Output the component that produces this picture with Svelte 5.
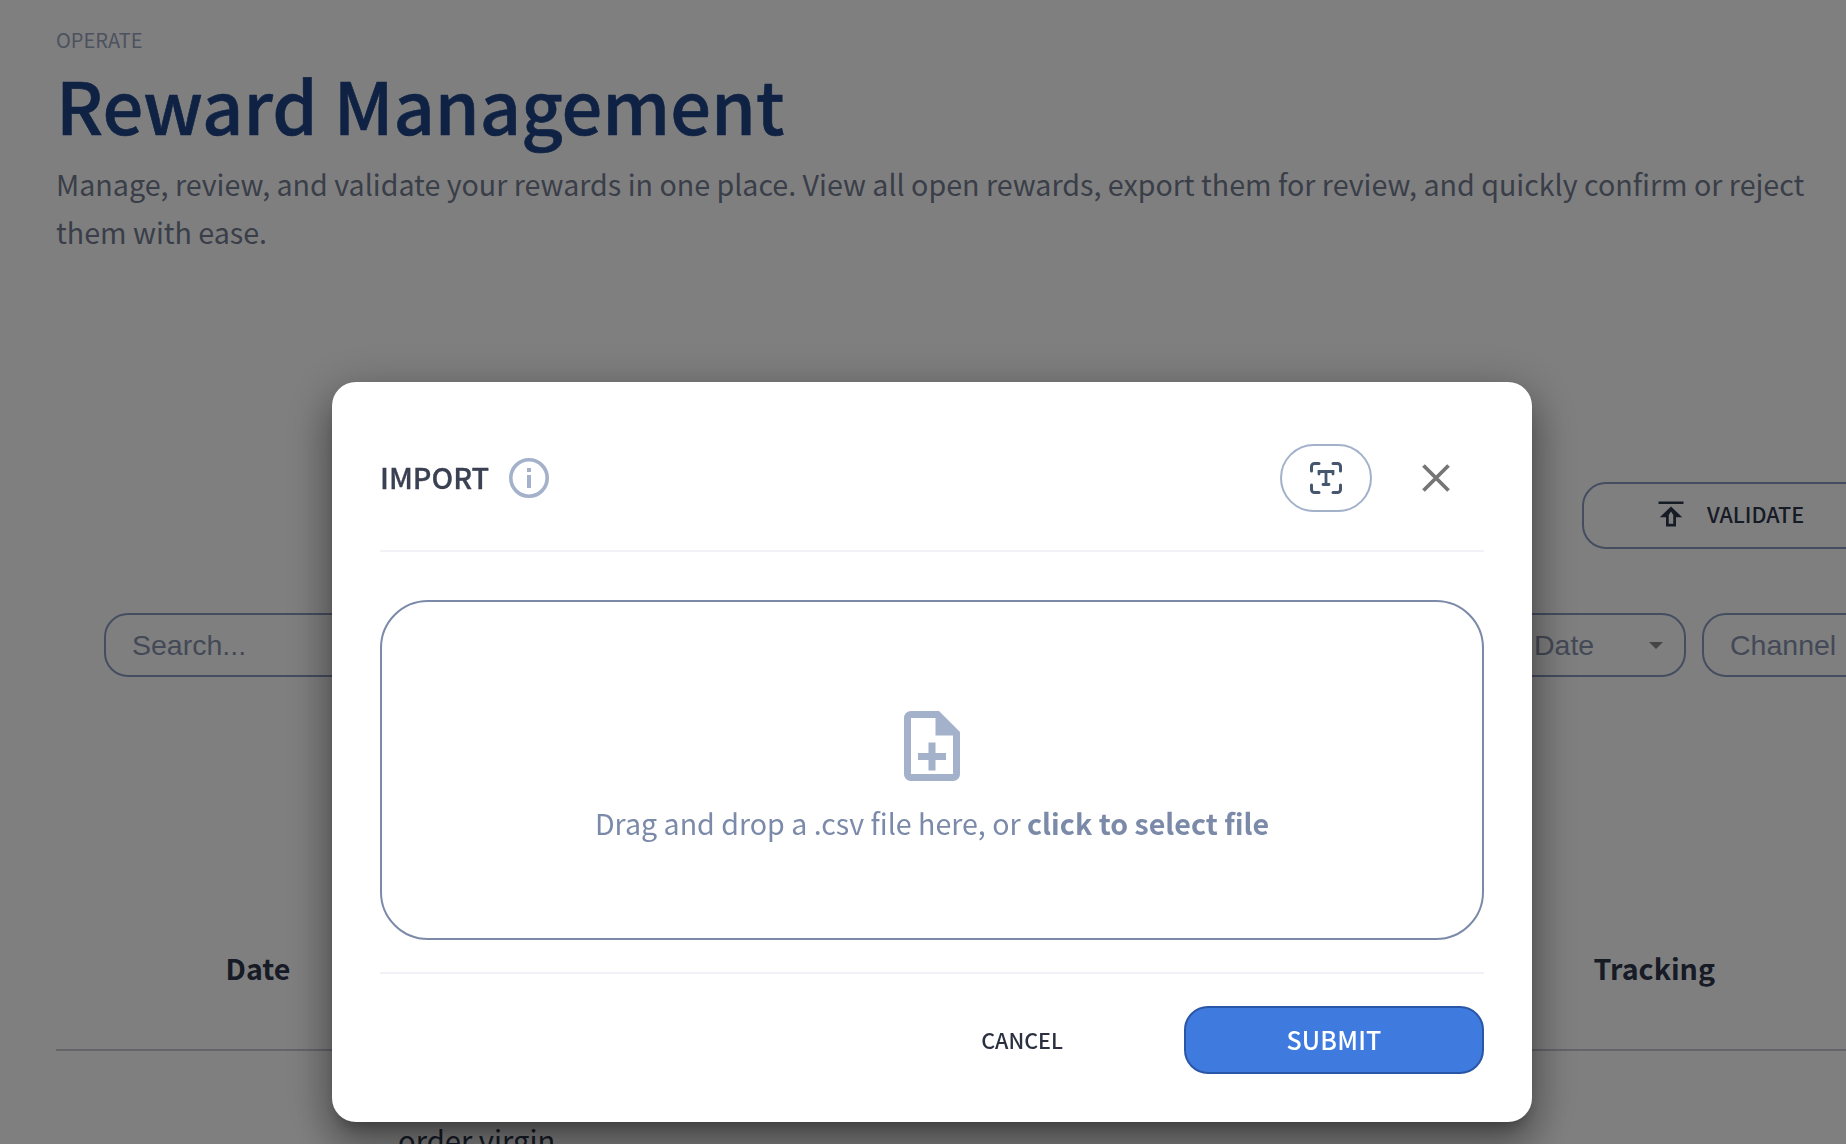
<script lang="ts">
  let fileName = $state('');
  const columns = ['Date', 'Tracking'];
</script>

<div class="page">
  <header class="page-head">
    <div class="eyebrow">OPERATE</div>
    <h1>Reward Management</h1>
    <p>Manage, review, and validate your rewards in one place. View all open rewards, export them for review, and quickly confirm or reject them with ease.</p>
  </header>

  <div class="actions">
    <button type="button" class="validate-btn">
      <svg viewBox="0 0 24 24" width="30" height="30" aria-hidden="true">
        <path d="M2 2h20v2H2zM12 6l-9 8.500h5v7.500h8v-7.500h5zM10.200 12.800 12 10l1.800 2.800v7h-3.600z" fill="#2c364c" fill-rule="evenodd" />
      </svg>
      <span>VALIDATE</span>
    </button>
  </div>

  <div class="filters">
    <div class="field search">Search...</div>
    <div class="field date">Date<span class="caret"></span></div>
    <div class="field channel">Channel</div>
  </div>

  <div class="table-head">
    {#each columns as col}
      <span>{col}</span>
    {/each}
  </div>
  <div class="row-text">order virgin</div>
</div>

<div class="overlay">
  <div class="modal" role="dialog" aria-label="Import">
    <div class="modal-head">
      <h2>IMPORT</h2>
      <svg class="info" viewBox="0 0 40 40" width="40" height="40" aria-hidden="true">
        <circle cx="20" cy="20" r="18.200" fill="none" stroke="#a3b1ca" stroke-width="3.600" />
        <rect x="18" y="10" width="4" height="4" fill="#a3b1ca" />
        <rect x="18" y="17" width="4" height="13" fill="#a3b1ca" />
      </svg>
      <button type="button" class="mode-btn" aria-label="Text mode">
        <svg viewBox="0 0 32 32" width="32" height="32" aria-hidden="true">
          <path d="M1.500 9V4.500a3 3 0 0 1 3-3H9M23 1.500h4.500a3 3 0 0 1 3 3V9M30.500 23v4.500a3 3 0 0 1-3 3H23M9 30.500H4.500a3 3 0 0 1-3-3V23" fill="none" stroke="#46566e" stroke-width="3" stroke-linecap="round" />
          <path d="M9 12V9.500h14V12M16 9.500v13M13 22.500h6" fill="none" stroke="#46566e" stroke-width="2.800" stroke-linecap="round" />
        </svg>
      </button>
      <button type="button" class="close-btn" aria-label="Close">
        <svg viewBox="0 0 28 28" width="28" height="28" aria-hidden="true">
          <path d="M1.500 1.500l25 25M26.500 1.500l-25 25" stroke="#757575" stroke-width="3.800" />
        </svg>
      </button>
    </div>

    <div class="dropzone">
      <svg viewBox="0 0 24 24" width="84" height="84" aria-hidden="true">
        <path d="M13 11h-2v3H8v2h3v3h2v-3h3v-2h-3zm1-9H6c-1.100 0-2 .9-2 2v16c0 1.100.89 2 1.990 2H18c1.100 0 2-.9 2-2V8l-6-6zm4 18H6V4h7v5h5v11z" fill="#a3b1ca" />
      </svg>
      <div class="drop-text">Drag and drop a .csv file here, or <b>click to select file</b>{fileName}</div>
    </div>

    <div class="modal-foot">
      <button type="button" class="cancel-btn">CANCEL</button>
      <button type="button" class="submit-btn">SUBMIT</button>
    </div>
  </div>
</div>

<style>
  :global(body) {
    margin: 0;
    overflow: hidden;
    background: #fff;
  }

  .page {
    box-sizing: border-box;
    width: 1846px;
    height: 1144px;
    padding: 26px 0 0 56px;
    overflow: hidden;
    font-family: "Noto Sans CJK SC", "Noto Sans", sans-serif;
  }

  .eyebrow {
    font-size: 20px;
    line-height: 28px;
    color: #9aa4c0;
  }

  h1 {
    margin: 0 0 6px;
    font-size: 72px;
    line-height: 100px;
    font-weight: 500;
    color: #1f4488;
    -webkit-text-stroke: 0.6px #1f4488;
  }

  .page-head p {
    width: 1760px;
    margin: 0;
    font-size: 28.640px;
    line-height: 48px;
    color: #747d92;
  }

  .actions {
    margin: 0 0 0 1526px;
    padding-top: 226px;
  }

  .validate-btn {
    display: flex;
    align-items: center;
    gap: 20px;
    box-sizing: border-box;
    width: 340px;
    height: 67px;
    padding: 0 0 4px 72px;
    background: none;
    border: 2px solid #8a9ac0;
    border-radius: 24px;
    font: 500 21.500px "Noto Sans CJK SC", sans-serif;
    color: #2c364c;
  }

  .validate-btn span {
    margin-left: 1px;
  }

  .filters {
    display: flex;
    margin: 64px 0 0 48px;
    font-family: "Liberation Sans", Arial, sans-serif;
    font-size: 28.500px;
    color: #8792ad;
  }

  .field {
    flex-shrink: 0;
    box-sizing: border-box;
    height: 64px;
    display: flex;
    align-items: center;
    border: 2px solid #8a9ac0;
    border-radius: 24px;
    padding: 0 26px;
  }

  .search { width: 560px; }

  .date {
    width: 300px;
    margin-left: 722px;
    padding-left: 146px;
    justify-content: space-between;
    padding-right: 21px;
  }

  .caret {
    border: 7px solid transparent;
    border-top-color: #8a8a8a;
    border-bottom: 0;
  }

  .channel {
    width: 300px;
    margin-left: 16px;
  }

  .table-head {
    display: grid;
    grid-template-columns: 404px 1390px;
    margin: 179px -60px 0 0;
    padding: 112px 0 0;
    height: 81px;
    border-bottom: 2px solid #c6cad2;
    font-size: 28.600px;
    font-weight: 700;
    color: #2c364c;
  }

  .table-head span {
    justify-self: center;
    line-height: 44px;
    margin-top: -22px;
  }

  .table-head span:last-child {
    justify-self: end;
    margin-right: 135px;
  }

  .row-text {
    margin: 68px 0 0 342px;
    font-size: 29.200px;
    line-height: 40px;
    color: #2c364c;
  }

  .overlay {
    position: fixed;
    inset: 0;
    box-sizing: border-box;
    padding: 382px 0 0 332px;
    background: rgba(0, 0, 0, 0.5);
    font-family: "Noto Sans CJK SC", "Noto Sans", sans-serif;
  }

  .modal {
    box-sizing: border-box;
    width: 1200px;
    height: 740px;
    padding: 0 48px;
    background: #fff;
    border-radius: 24px;
    box-shadow: 0 11px 15px -7px rgba(0, 0, 0, 0.3), 0 24px 38px 3px rgba(0, 0, 0, 0.25), 0 9px 46px 8px rgba(0, 0, 0, 0.2);
  }

  .modal-head {
    display: flex;
    align-items: center;
    height: 170px;
    padding-top: 24px;
    border-bottom: 2px solid #f1f1f7;
    box-sizing: border-box;
  }

  h2 {
    margin: 0 20px 4px 0;
    font-size: 28.800px;
    font-weight: 500;
    color: #3a4152;
    -webkit-text-stroke: 0.3px #3a4152;
  }

  .mode-btn {
    display: flex;
    align-items: center;
    justify-content: center;
    width: 92px;
    height: 68px;
    margin-left: auto;
    padding: 0;
    background: #fff;
    border: 2px solid #a3b1ca;
    border-radius: 34px;
  }

  .close-btn {
    display: flex;
    width: 28px;
    height: 28px;
    margin: 0 34px 0 50px;
    padding: 0;
    background: none;
    border: 0;
  }

  .dropzone {
    box-sizing: border-box;
    height: 340px;
    margin-top: 48px;
    display: flex;
    flex-direction: column;
    align-items: center;
    padding-top: 102px;
    border: 2px solid #7b8aa8;
    border-radius: 48px;
  }

  .drop-text {
    margin-top: 11px;
    font-size: 28.600px;
    line-height: 48px;
    color: #7b8aa8;
  }

  .drop-text b {
    font-weight: 700;
  }

  .modal-foot {
    display: flex;
    align-items: center;
    justify-content: flex-end;
    height: 134px;
    margin-top: 32px;
    border-top: 2px solid #f1f1f7;
    box-sizing: border-box;
  }

  .cancel-btn {
    margin-right: 121px;
    padding: 0 0 2px;
    background: none;
    border: 0;
    font: 500 21.500px "Noto Sans CJK SC", sans-serif;
    color: #2a3040;
  }

  .submit-btn {
    width: 300px;
    height: 68px;
    padding: 0 0 2px;
    background: #3f7adf;
    border: 2px solid #2a56a8;
    border-radius: 24px;
    font: 500 25px "Noto Sans CJK SC", sans-serif;
    letter-spacing: 0.2px;
    color: #fff;
  }
</style>
